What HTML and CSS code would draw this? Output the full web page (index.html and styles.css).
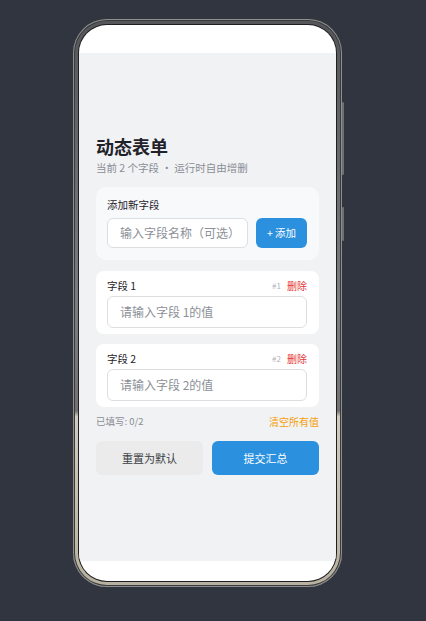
FILE: index.html
```html
<!DOCTYPE html>
<html lang="zh-CN">
<head>
  <meta charset="UTF-8">
  <meta name="viewport" content="width=device-width, initial-scale=1.0">
  <title>动态表单</title>
  <link rel="stylesheet" href="styles.css">
</head>
<body>
  <div class="phone">
    <span class="side-btn btn-a"></span>
    <span class="side-btn btn-b"></span>
    <div class="screen">
      <div class="status-bar"></div>
      <main class="app">
        <h1 class="page-title">动态表单</h1>
        <p class="subtitle">当前 2 个字段 · 运行时自由增删</p>

        <section class="add-card">
          <div class="card-label">添加新字段</div>
          <div class="add-row">
            <input class="text-input" type="text" placeholder="输入字段名称（可选）">
            <button class="add-btn">+ 添加</button>
          </div>
        </section>

        <div id="field-list">
          <!-- fields are rendered here -->
        </div>

        <div class="summary-row">
          <span class="filled" id="filled-count">已填写: 0/2</span>
          <a href="#" class="clear-link">清空所有值</a>
        </div>

        <div class="actions">
          <button class="reset-btn">重置为默认</button>
          <button class="submit-btn">提交汇总</button>
        </div>
      </main>
      <div class="home-bar"></div>
    </div>
  </div>

  <script>
    const fields = [
      { id: 1, name: '字段 1' },
      { id: 2, name: '字段 2' }
    ];

    const list = document.getElementById('field-list');
    fields.forEach(field => {
      const card = document.createElement('div');
      card.classList.add('field-card');
      card.innerHTML = `
        <div class="field-head">
          <span class="field-name">${field.name}</span>
          <span class="field-meta"><span class="field-id">#${field.id}</span><a href="#" class="del-link">删除</a></span>
        </div>
        <input class="text-input field-input" type="text" placeholder="请输入${field.name}的值">
      `;
      list.appendChild(card);
    });
  </script>
</body>
</html>
```

FILE: styles.css
```css
body {
  margin: 0;
  padding: 19px 0 0 73px;
  background-color: #31353f;
  font-family: "Noto Sans CJK SC", "Noto Sans", sans-serif;
  height: 621px;
  box-sizing: border-box;
  overflow: hidden;
}

.phone {
  position: relative;
  width: 269px;
  height: 568px;
  box-sizing: border-box;
  padding: 6px;
  border-radius: 34px;
  background: linear-gradient(to bottom, #55565a 0%, #7c7d80 50%, #737270 69%, #d2cbbb 70%, #b9b19f 100%);
  box-shadow: inset 0 0 0 1px #8e8e8c, inset 0 0 0 2px #3a3b3f;
}

.side-btn {
  position: absolute;
  right: -2px;
  width: 2px;
  background-color: #6d6f74;
  border-radius: 1px;
}

.btn-a {
  top: 83px;
  height: 73px;
}

.btn-b {
  top: 188px;
  height: 34px;
}

.screen {
  height: 100%;
  border-radius: 28px;
  overflow: hidden;
  background-color: #ffffff;
  display: flex;
  flex-direction: column;
  box-shadow: 0 0 0 1px #1e1f22;
}

.status-bar {
  height: 28px;
  flex-shrink: 0;
}

.home-bar {
  height: 20px;
  flex-shrink: 0;
}

.app {
  flex-grow: 1;
  background-color: #f1f2f4;
  padding: 0 17px 5px;
  display: flex;
  flex-direction: column;
  justify-content: center;
}

.page-title {
  margin: 0;
  font-size: 18px;
  font-weight: bold;
  color: #1f2329;
  line-height: 22px;
}

.subtitle {
  margin: 3px 0 12px;
  font-size: 10.5px;
  color: #8a8e96;
  line-height: 15px;
}

.add-card {
  background-color: #f8f9fb;
  border-radius: 10px;
  padding: 10px 12px 12px 11px;
}

.card-label {
  font-size: 10.5px;
  color: #1f2329;
  line-height: 15px;
  margin-bottom: 6px;
}

.add-row {
  display: flex;
  gap: 8px;
}

.text-input {
  flex-grow: 1;
  min-width: 0;
  height: 30px;
  box-sizing: border-box;
  border: 1px solid #dcdee2;
  border-radius: 6px;
  background-color: #ffffff;
  padding: 0 12px;
  font-family: inherit;
  font-size: 12px;
  color: #333;
}

.text-input::placeholder {
  color: #8c9097;
}

.add-btn {
  flex-shrink: 0;
  width: 51px;
  height: 30px;
  border: none;
  border-radius: 6px;
  background-color: #2b90de;
  color: #ffffff;
  font-family: inherit;
  font-size: 10.5px;
}

#field-list {
  display: flex;
  flex-direction: column;
  gap: 10px;
  margin-top: 11px;
}

.field-card {
  background-color: #ffffff;
  border-radius: 8px;
  padding: 7px 12px 6px 11px;
  display: flex;
  flex-direction: column;
}

.field-head {
  display: flex;
  justify-content: space-between;
  align-items: center;
  height: 15px;
  line-height: 15px;
  margin-bottom: 3px;
}

.field-name {
  font-size: 10.5px;
  color: #1f2329;
}

.field-meta {
  display: flex;
  align-items: center;
  gap: 6px;
}

.field-id {
  font-size: 8px;
  color: #b0b3b8;
}

.del-link {
  font-size: 10px;
  color: #e53935;
  text-decoration: none;
}

.field-input {
  flex-grow: 0;
  width: 100%;
  height: 32px;
}

.summary-row {
  display: flex;
  justify-content: space-between;
  align-items: center;
  margin-top: 7px;
  height: 15px;
  line-height: 15px;
}

.filled {
  font-size: 9.5px;
  color: #8a8e96;
}

.clear-link {
  font-size: 10px;
  color: #f59e0b;
  text-decoration: none;
}

.actions {
  display: flex;
  gap: 9px;
  margin-top: 12px;
}

.actions button {
  flex: 1;
  height: 34px;
  border: none;
  border-radius: 6px;
  font-family: inherit;
  font-size: 11px;
}

.reset-btn {
  background-color: #ebebec;
  color: #3a3d42;
}

.submit-btn {
  background-color: #2b90de;
  color: #ffffff;
}
```
